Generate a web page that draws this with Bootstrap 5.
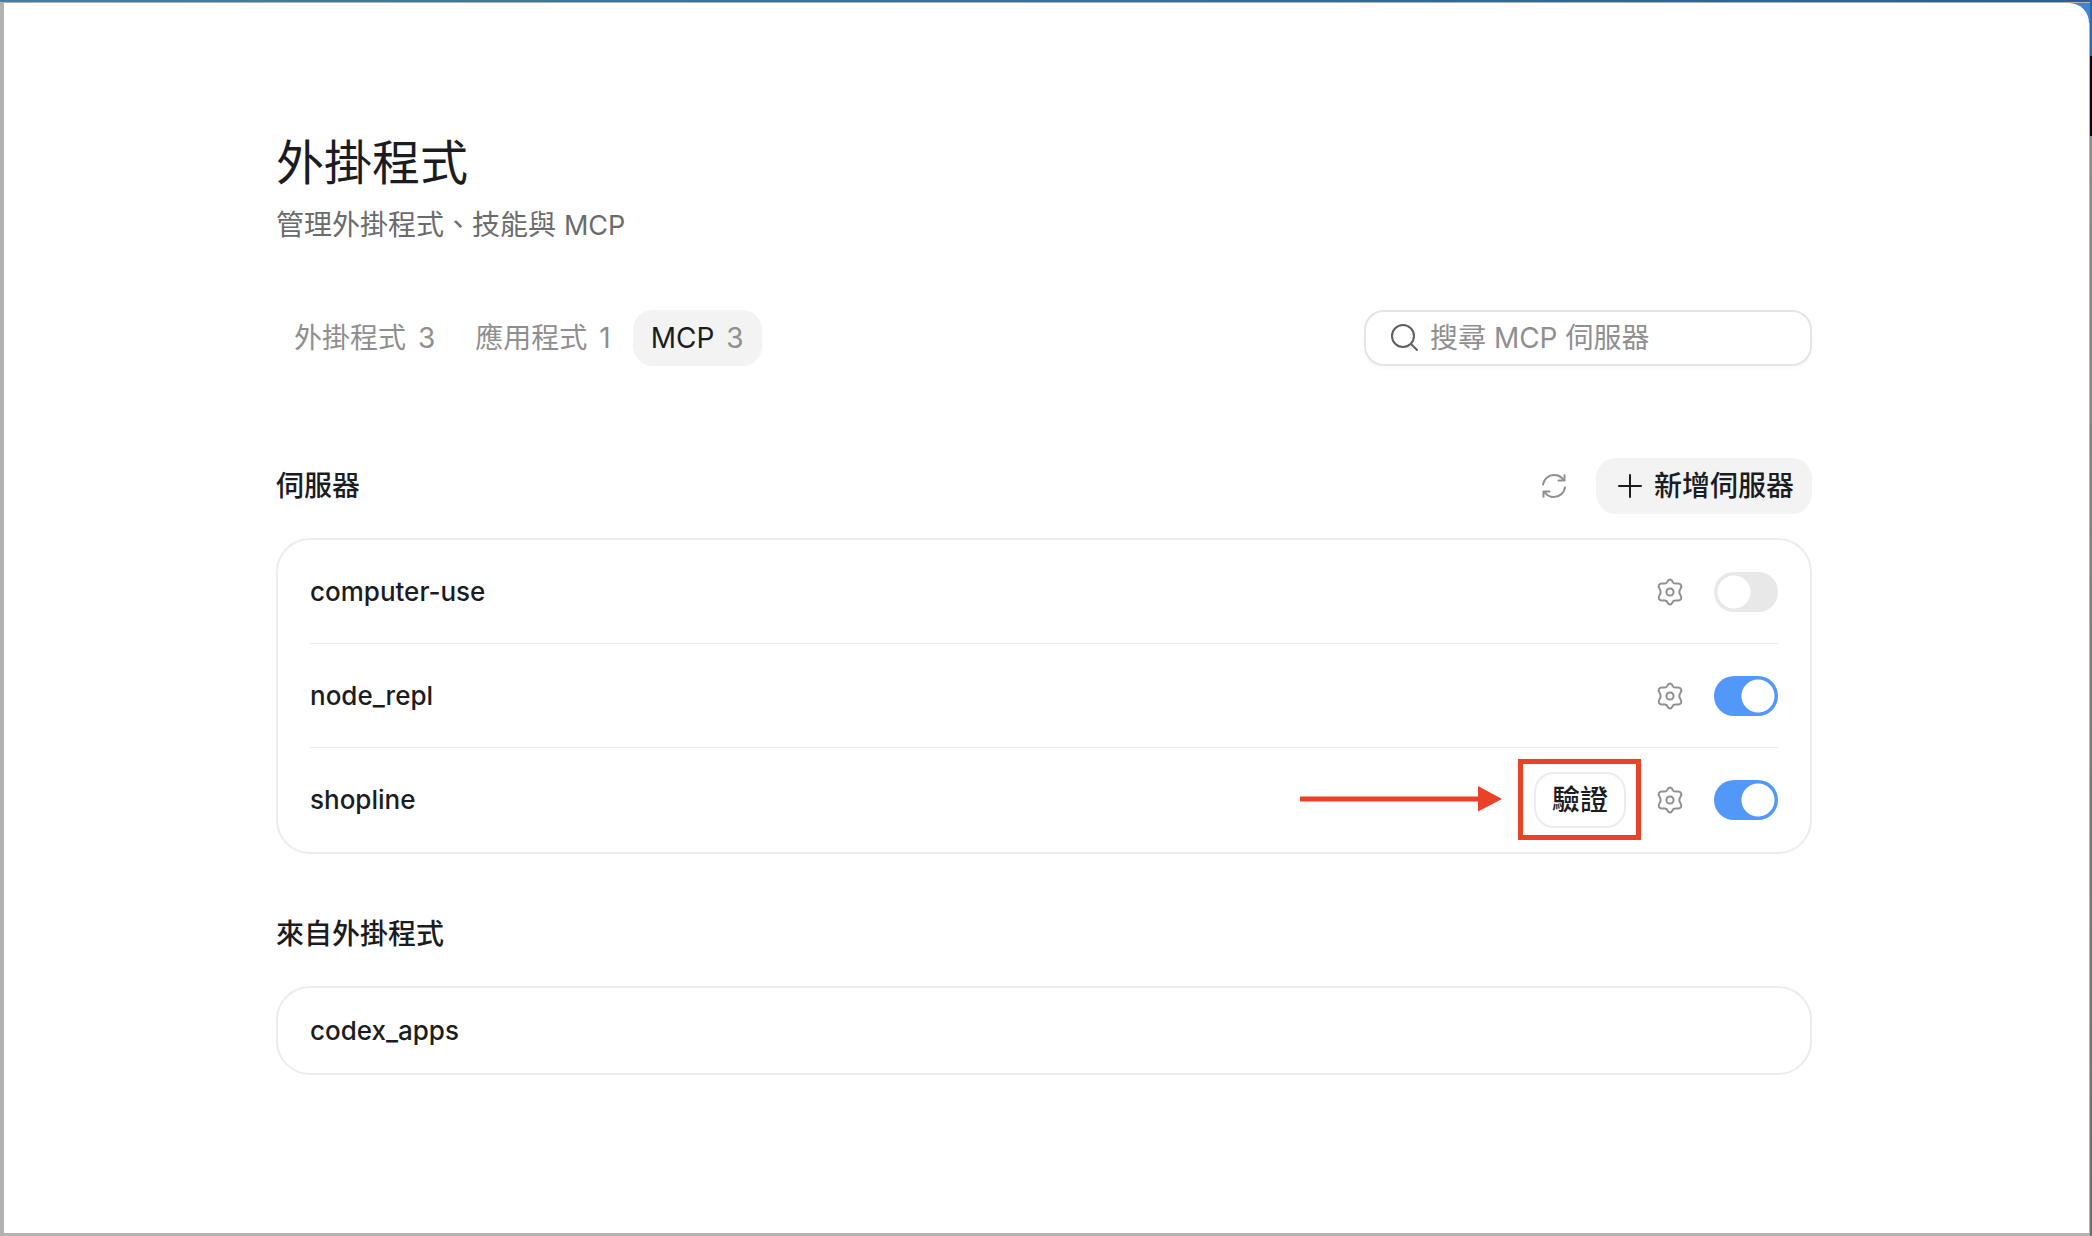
<!DOCTYPE html>
<html lang="zh-Hant">
<head>
<meta charset="utf-8">
<meta name="viewport" content="width=device-width, initial-scale=1">
<title>外掛程式</title>
<link href="https://cdn.jsdelivr.net/npm/bootstrap@5.3.0/dist/css/bootstrap.min.css" rel="stylesheet">
<style>
  :root { --ink: #1a1c1f; --muted: #8f8f8f; --line: #ececec; --soft: #f3f3f3; --callout: #eb4127; }
  body { font-family: Inter, "Noto Sans CJK TC", sans-serif; font-size: 28px; line-height: 40px; color: var(--ink); }

  /* desktop strip visible round the window */
  .desktop {
    padding: 3px 3px 3px 4px;
    background:
      linear-gradient(#2b6aab 0 56px, #12000f 56px 136px, #8c8c8c 136px, #6f6f6f) right top / 2px 100% no-repeat,
      linear-gradient(#3c86d2, #3c86d2) right 2px top 3px / 20px 20px no-repeat,
      linear-gradient(90deg, #4b7c9a, #2b5f95) left top / 100% 2px no-repeat,
      #b3b2b2;
  }
  .app-window { background: #fff; border-top-right-radius: 20px; padding: 128px 32px 32px 27px; }
  .page-column { max-width: 1536px; }

  .page-title { font-size: 48px; line-height: 64px; font-weight: 400; margin-bottom: 10px; }
  .page-lead { color: #6b6b6b; }
  .latin { font-size: 27px; }

  .tab-pill { --bs-nav-pills-border-radius: 20px; }
  .tab-pill .nav-link { display: flex; gap: 12px; padding: 8px 18px; color: var(--muted); }
  .tab-pill .nav-link.active { background: var(--soft); color: var(--ink); }
  .tab-pill .tally { color: var(--muted); }

  .search-box { width: 448px; height: 56px; padding: 0 24px; gap: 12px; border: 2px solid #e5e5e5; border-radius: 20px; box-shadow: 0 2px 4px rgba(0,0,0,.03); }
  .search-box input { font-size: 28px; line-height: 40px; }
  .search-box input::placeholder { color: var(--muted); opacity: 1; }

  .servers { margin-top: 92px; }
  .head-row { margin-bottom: 24px; }
  .tools { gap: 14px; }
  .from-plugins { margin-top: 60px; }
  .from-plugins .section-title { margin-bottom: 32px; }

  .section-title { font-size: 28px; line-height: 40px; font-weight: 500; }
  .tool-btn { width: 56px; height: 56px; padding: 0; color: var(--muted); border: 0; }
  .add-btn, .auth-btn { height: 56px; border-radius: 20px; font-size: 28px; line-height: 40px; font-weight: 500; color: var(--ink); }
  .add-btn { padding: 0 18px; gap: 8px; background: var(--soft); border: 0; }
  .auth-btn { padding: 0 16px; border: 2px solid var(--line); background: #fff; }

  .server-card { border: 2px solid var(--line); border-radius: 34px; padding: 0 32px; --bs-list-group-bg: transparent; }
  .server-row { height: 104px; padding: 0; gap: 16px; color: var(--ink); border-color: var(--line); font-size: 26px; font-weight: 500; }
  .plain-row { height: 85px; }

  .form-check-input.toggle {
    width: 64px; height: 40px; margin: 0; border: 0; border-radius: 20px; background-color: #e8e8e8;
    background-image: radial-gradient(circle at 20px 20px, #fff 16px, transparent 17px); background-size: 100% 100%; background-position: 0 0;
  }
  .form-check-input.toggle:checked { background-color: #5298f8; background-image: radial-gradient(circle at 44px 20px, #fff 16px, transparent 17px); }

  /* annotation drawn over the list */
  .callout-frame { position: absolute; inset: -13px -15px -12px -16px; border: 5px solid var(--callout); pointer-events: none; }
  .callout-arrow { position: absolute; right: 124px; top: 14px; pointer-events: none; }
</style>
<script src="https://cdn.jsdelivr.net/npm/bootstrap@5.3.0/dist/js/bootstrap.bundle.min.js"></script>
</head>
<body>
<svg class="d-none" aria-hidden="true">
  <symbol id="gear" viewBox="0 0 28 28">
    <path d="M14 1.600c1.400 0 2.100.8 2.700 2.200.5 1.200 1.200 1.800 2.400 1.800l2.600-.2c1.700-.1 2.700.5 3.300 1.600.7 1.200.5 2.200-.4 3.500-1.400 2-1.400 5 0 7 .9 1.300 1.100 2.300.4 3.500-.6 1.100-1.600 1.700-3.300 1.600l-2.600-.2c-1.200 0-1.900.6-2.400 1.800-.6 1.400-1.300 2.200-2.700 2.200s-2.100-.8-2.700-2.200c-.5-1.200-1.200-1.800-2.400-1.800l-2.600.2c-1.700.1-2.700-.5-3.300-1.600-.7-1.200-.5-2.200.4-3.500 1.400-2 1.400-5 0-7-.9-1.300-1.100-2.300-.4-3.500.6-1.100 1.600-1.700 3.300-1.600l2.600.2c1.200 0 1.900-.6 2.400-1.800.6-1.400 1.300-2.200 2.700-2.200z" fill="none" stroke="currentColor" stroke-width="2"/>
    <circle cx="14" cy="14" r="3.600" fill="none" stroke="currentColor" stroke-width="2"/>
  </symbol>
</svg>

<div class="desktop min-vh-100 d-flex">
  <main class="app-window flex-grow-1">
    <div class="page-column mx-auto">
      <header>
        <h1 class="page-title">外掛程式</h1>
        <p class="page-lead mb-0">管理外掛程式、技能與 <span class="latin">MCP</span></p>
      </header>

      <div class="d-flex flex-wrap justify-content-between align-items-center mt-5 pt-3">
        <ul class="nav nav-pills tab-pill gap-1">
          <li class="nav-item"><a class="nav-link" href="#">外掛程式 <span class="tally">3</span></a></li>
          <li class="nav-item"><a class="nav-link" href="#">應用程式 <span class="tally">1</span></a></li>
          <li class="nav-item"><a class="nav-link active" aria-current="page" href="#">MCP <span class="tally">3</span></a></li>
        </ul>
        <label class="search-box d-flex align-items-center">
          <svg class="flex-shrink-0" width="28" height="28" viewBox="0 0 28 28" fill="none" stroke="#5f5f5f" stroke-width="2" stroke-linecap="round" aria-hidden="true"><circle cx="13" cy="12" r="11"/><path d="M21 20l6 6"/></svg>
          <input class="form-control border-0 p-0 shadow-none bg-transparent" type="search" placeholder="搜尋 MCP 伺服器" aria-label="搜尋 MCP 伺服器">
        </label>
      </div>

      <section class="servers">
        <div class="d-flex align-items-center justify-content-between head-row">
          <h2 class="section-title mb-0">伺服器</h2>
          <div class="d-flex align-items-center tools">
            <button class="btn tool-btn d-flex align-items-center justify-content-center" type="button" aria-label="重新整理">
              <svg width="28" height="28" viewBox="0 0 28 28" fill="none" stroke="currentColor" stroke-width="2" stroke-linecap="round" stroke-linejoin="round" aria-hidden="true"><path d="M3 12.500C3.800 7 8.500 3 14 3c4 0 7.400 1.800 9.400 5"/><path d="M24.500 3.200v5.300h-6"/><path d="M25 15.500C24.200 21 19.500 25 14 25c-4 0-7.400-1.800-9.400-5"/><path d="M3.500 24.800v-5.300h6"/></svg>
            </button>
            <button class="btn add-btn d-flex align-items-center" type="button">
              <svg width="32" height="32" viewBox="0 0 32 32" fill="none" stroke="currentColor" stroke-width="2" stroke-linecap="round" aria-hidden="true"><path d="M16 5v22M5 16h22"/></svg>
              新增伺服器
            </button>
          </div>
        </div>

        <ul class="list-group list-group-flush server-card">
          <li class="list-group-item server-row d-flex align-items-center">
            <label class="me-auto" for="sw-computer">computer-use</label>
            <button class="btn tool-btn" type="button" aria-label="設定 computer-use"><svg class="d-block mx-auto" width="28" height="28" aria-hidden="true"><use href="#gear"/></svg></button>
            <input class="form-check-input toggle" type="checkbox" role="switch" id="sw-computer">
          </li>
          <li class="list-group-item server-row d-flex align-items-center">
            <label class="me-auto" for="sw-node">node_repl</label>
            <button class="btn tool-btn" type="button" aria-label="設定 node_repl"><svg class="d-block mx-auto" width="28" height="28" aria-hidden="true"><use href="#gear"/></svg></button>
            <input class="form-check-input toggle" type="checkbox" role="switch" id="sw-node" checked>
          </li>
          <li class="list-group-item server-row d-flex align-items-center">
            <label class="me-auto" for="sw-shopline">shopline</label>
            <div class="position-relative">
              <button class="btn auth-btn d-block" type="button">驗證</button>
              <span class="callout-frame"></span>
              <svg class="callout-arrow" width="202" height="26" viewBox="0 0 202 26" fill="#eb4127" aria-hidden="true"><path d="M0 10.500h178V0l24 13-24 12.500V15.500H0z"/></svg>
            </div>
            <button class="btn tool-btn" type="button" aria-label="設定 shopline"><svg class="d-block mx-auto" width="28" height="28" aria-hidden="true"><use href="#gear"/></svg></button>
            <input class="form-check-input toggle" type="checkbox" role="switch" id="sw-shopline" checked>
          </li>
        </ul>
      </section>

      <section class="from-plugins">
        <h2 class="section-title">來自外掛程式</h2>
        <ul class="list-group list-group-flush server-card">
          <li class="list-group-item server-row plain-row d-flex align-items-center">codex_apps</li>
        </ul>
      </section>
    </div>
  </main>
</div>
</body>
</html>
